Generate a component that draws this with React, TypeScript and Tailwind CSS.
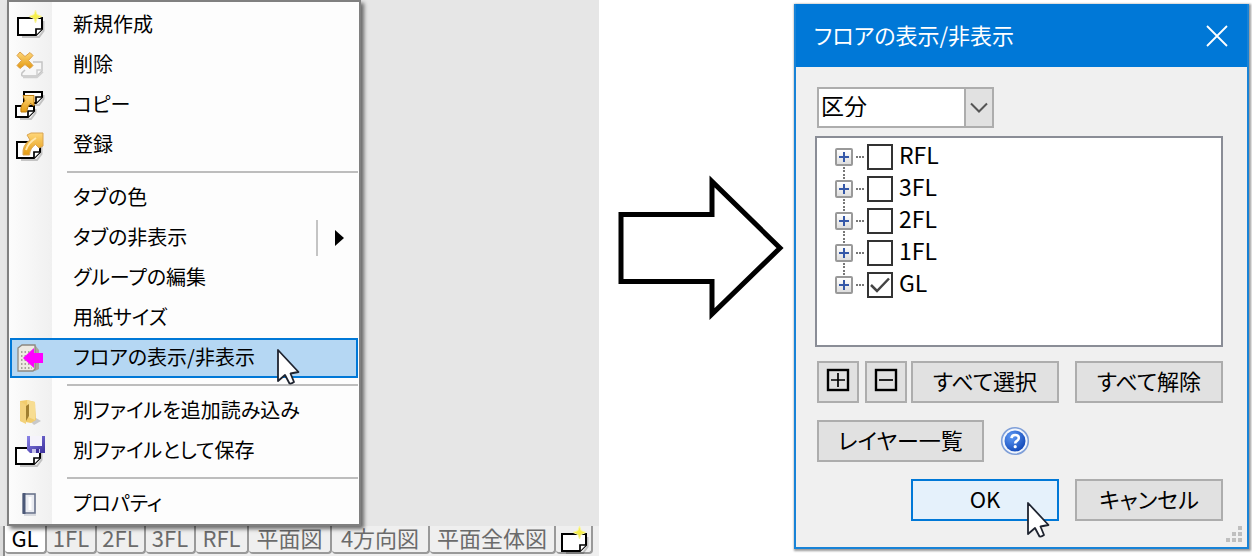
import React from "react";

function Cursor() {
  return (
    <svg width="24" height="37" viewBox="0 0 24 37" aria-hidden="true">
      <path
        d="M2 2V33L9 27L13.5 35.5Q15.500 36 18 34L14.500 25.500L22.500 24Z"
        fill="#fff"
        stroke="#1f2430"
        strokeWidth="1.8"
        strokeLinejoin="round"
      />
    </svg>
  );
}

function Icon({ children }: { children?: React.ReactNode }) {
  return (
    <svg width="30" height="30" viewBox="0 0 30 30" className="shrink-0 overflow-visible" aria-hidden="true">
      <defs>
        <linearGradient id="gold" x1="0" y1="0" x2="0" y2="1">
          <stop offset="0" stopColor="#ffd77a" />
          <stop offset="1" stopColor="#e39a10" />
        </linearGradient>
        <linearGradient id="floppy" x1="0" y1="0" x2="1" y2="1">
          <stop offset="0" stopColor="#8b84e8" />
          <stop offset="1" stopColor="#3b2f9c" />
        </linearGradient>
      </defs>
      {children}
    </svg>
  );
}

/* A sheet of paper with its lower right corner folded up. */
function Sheet({ x, y, w, h }: { x: number; y: number; w: number; h: number }) {
  const r = x + w;
  const b = y + h;
  return (
    <g>
      <path d={`M${r + 1.5} ${y + 3}V${b - 4}L${r - 3} ${b + 2}H${x + 4}`} fill="none" stroke="#000" strokeOpacity=".2" strokeWidth="2" />
      <path d={`M${x} ${y}H${r}V${b - 6}L${r - 6} ${b}H${x}Z`} fill="#fff" stroke="#000" strokeWidth="2" />
      <path d={`M${r - 6} ${b}V${b - 6}H${r}`} fill="#fff" stroke="#000" strokeWidth="1.7" />
    </g>
  );
}

function NewIcon() {
  return (
    <Icon>
      <Sheet x={3} y={8} w={24} h={17} />
      <path d="M20.500 0L22 4.500L27 6.500L22 8.500L20.500 13L19 8.500L14 6.500L19 4.500Z" fill="#f6ee4a" stroke="#faf6a0" strokeWidth="1" />
    </Icon>
  );
}

function DeleteIcon() {
  return (
    <Icon>
      <path d="M18 12H27V21L22 26H8Q6 26 7 23L10 20" fill="#f7f7f7" stroke="#c4c4c4" strokeWidth="1.500" />
      <path d="M27 20H22V26M8 27.500H22L28 22" fill="none" stroke="#cfcfcf" strokeWidth="1.500" />
      <path
        d="M5 2L10 6.500L15 2.500L18 5.500L13.500 10.500L18 15.500L15 18.500L10 14.500L5 18.500L2 15.500L6.500 10.500L2 5.500Z"
        fill="url(#gold)"
        stroke="#dba04a"
        strokeWidth="1"
      />
    </Icon>
  );
}

function CopyIcon() {
  return (
    <Icon>
      <Sheet x={9} y={2} w={18} h={11} />
      <Sheet x={1} y={16} w={18} h={11} />
      <path d="M6 22Q5 15 10 11L8 5.500H19V16L15.500 13.500Q12 17 11.500 22Z" fill="url(#gold)" stroke="#bd7c10" strokeWidth="1" />
    </Icon>
  );
}

function RegisterIcon() {
  return (
    <Icon>
      <Sheet x={2} y={12} w={23} h={16} />
      <path d="M8 25Q7 15 15 10L12 5L16 3H28V16L24 18L20.500 14.500Q15 18 14.500 25Z" fill="url(#gold)" stroke="#d9a452" strokeWidth="1" />
      <path d="M11 20Q13 13 21 8" fill="none" stroke="#ffe7ae" strokeWidth="2" />
    </Icon>
  );
}

function FloorIcon() {
  return (
    <Icon>
      <path d="M6 2H20L24 7V26L20 28H6Z" fill="#aaa59c" />
      <path d="M3 5L7 2H20V26L18 28H3Z" fill="#eeeae2" stroke="#8d8880" strokeWidth="1.300" />
      <path d="M6 9H17M6 13H17M6 17H17M6 21H17M6 25H17" stroke="#918c84" strokeWidth="1.500" strokeDasharray="1.500 2" />
      <path d="M8 15L19 5V10H28V20H19V25Z" fill="#ff00ff" />
    </Icon>
  );
}

function FolderIcon() {
  return (
    <Icon>
      <path d="M16 26L21 22L26 25L19 29Z" fill="#c9c9c9" />
      <path d="M5 5L12 4L20 6L21 24L16 27L5 25Z" fill="#f1cc6c" />
      <path d="M12 4L20 6V24L13 21Z" fill="#f7dd92" />
      <path d="M11 10L14 8V20L11 25Z" fill="#a07f30" />
      <path d="M5 5L11 9V28L5 25Z" fill="#f3d27c" />
    </Icon>
  );
}

function SaveIcon() {
  return (
    <Icon>
      <Sheet x={1} y={12} w={24} h={16} />
      <path d="M12 0H30V17H15L12 14Z" fill="url(#floppy)" />
      <path d="M15 0H27V10H15Z" fill="#f5f3fb" />
      <path d="M17 13H25V17H17Z" fill="#c8c4ea" />
      <path d="M21 13H24V17H21Z" fill="#40349c" />
    </Icon>
  );
}

function PropertyIcon() {
  return (
    <Icon>
      <rect x="8" y="5" width="12" height="19" fill="#e9ebf1" stroke="#6a748c" strokeWidth="1.600" />
      <rect x="8" y="4" width="2.500" height="21" fill="#4b5878" />
      <path d="M15 8V21" stroke="#fff" strokeWidth="3" />
      <path d="M9 26H21" stroke="#b9bdc8" strokeWidth="1" />
    </Icon>
  );
}

type Item = { label: string; icon?: React.ReactNode; sub?: boolean; active?: boolean };

const groups: Item[][] = [
  [
    { label: "新規作成", icon: <NewIcon /> },
    { label: "削除", icon: <DeleteIcon /> },
    { label: "コピー", icon: <CopyIcon /> },
    { label: "登録", icon: <RegisterIcon /> },
  ],
  [
    { label: "タブの色" },
    { label: "タブの非表示", sub: true },
    { label: "グループの編集" },
    { label: "用紙サイズ" },
    { label: "フロアの表示/非表示", icon: <FloorIcon />, active: true },
  ],
  [
    { label: "別ファイルを追加読み込み", icon: <FolderIcon /> },
    { label: "別ファイルとして保存", icon: <SaveIcon /> },
  ],
  [{ label: "プロパティ", icon: <PropertyIcon /> }],
];

function ContextMenu() {
  return (
    <div
      role="menu"
      className="relative z-10 ml-[7px] flex w-[354px] flex-col border-2 border-[#808080] bg-[#fdfdfd] bg-[linear-gradient(to_right,#fcfcfc,#f0f0f0)] bg-[length:43px_100%] bg-no-repeat px-px pt-[3px] text-[20px] leading-none text-black shadow-[3px_3px_4px_rgba(0,0,0,0.55)]"
    >
      {groups.map((items, g) => (
        <React.Fragment key={g}>
          {g > 0 && (
            <div role="separator" className="flex h-[13px] items-center pl-[57px]">
              <div className="h-0.5 flex-1 bg-[#bdbdbd]" />
            </div>
          )}
          {items.map((item) => (
            <button
              key={item.label}
              role="menuitem"
              className={
                item.active
                  ? "relative flex h-10 items-center border-2 border-[#0078d7] bg-[#b5d7f3] pl-[3px] text-left"
                  : "relative flex h-10 items-center pl-[5px] text-left"
              }
            >
              {item.icon ?? <Icon />}
              <span className="ml-7 flex-1 pb-0.5 whitespace-nowrap">{item.label}</span>
              {item.sub && (
                <span className="flex h-9 items-center border-l-2 border-[#c4c4c4] pr-3 pl-4">
                  <svg width="12" height="18" viewBox="0 0 12 18" aria-hidden="true">
                    <path d="M1 1L10 9L1 17Z" fill="#000" />
                  </svg>
                </span>
              )}
              {item.active && (
                <span className="absolute top-2 left-[264px]">
                  <Cursor />
                </span>
              )}
            </button>
          ))}
        </React.Fragment>
      ))}
    </div>
  );
}

const tabs = [
  { label: "GL", cls: "w-[42px] bg-white text-black" },
  { label: "1FL", cls: "w-[50px] text-[#6b6b6b]" },
  { label: "2FL", cls: "w-[49px] text-[#6b6b6b]" },
  { label: "3FL", cls: "w-[50px] text-[#6b6b6b]" },
  { label: "RFL", cls: "w-[53px] text-[#6b6b6b]" },
  { label: "平面図", cls: "w-[83px] text-[#6b6b6b]" },
  { label: "4方向図", cls: "w-[98px] text-[#6b6b6b]" },
  { label: "平面全体図", cls: "w-[126px] text-[#6b6b6b]" },
];

function TabBar() {
  return (
    <div className="flex flex-1 items-start bg-[#efefef] text-[22px] leading-none">
      <div className="w-[5px] self-stretch border-r-2 border-[#8a8a8a] bg-[#dcdcdc]" />
      {tabs.map((t) => (
        <button
          key={t.label}
          className={`flex h-7 shrink-0 items-center justify-center rounded-b border-r-2 border-b-2 border-[#999] pb-1 whitespace-nowrap ${t.cls}`}
        >
          {t.label}
        </button>
      ))}
      <button aria-label="新規作成" className="flex h-7 w-[37px] shrink-0 items-start justify-center rounded-b border-r-2 border-b-2 border-[#999]">
        <NewIcon />
      </button>
    </div>
  );
}

const floors = [
  { label: "RFL", checked: false },
  { label: "3FL", checked: false },
  { label: "2FL", checked: false },
  { label: "1FL", checked: false },
  { label: "GL", checked: true },
];

function FloorTree() {
  return (
    <ul className="mt-2 h-[211px] border-2 border-[#8a8d96] bg-white pt-[3px] pl-[18px]">
      {floors.map((f, i) => (
        <li key={f.label} className="relative flex h-8 items-center text-[23px] leading-none">
          {i < floors.length - 1 && (
            <span className="absolute top-[26px] left-2 h-3 border-l-2 border-dotted border-[#777]" />
          )}
          <button
            aria-label={`${f.label} を展開`}
            className="flex size-[18px] items-center justify-center rounded-xs border-2 border-[#999] bg-linear-to-b from-white to-[#dedede]"
          >
            <svg width="12" height="12" viewBox="0 0 12 12" className="shrink-0" aria-hidden="true">
              <path d="M6 1V11M1 6H11" stroke="#3558a8" strokeWidth="2" />
            </svg>
          </button>
          <span className="mx-[3px] w-2 border-t-2 border-dotted border-[#777]" />
          <label className="flex items-center">
            <span className="relative flex">
              <input
                type="checkbox"
                defaultChecked={f.checked}
                className="peer size-[26px] appearance-none border-2 border-[#333] bg-white"
              />
              <svg
                width="26"
                height="26"
                viewBox="0 0 26 26"
                aria-hidden="true"
                className="pointer-events-none absolute inset-0 hidden peer-checked:block"
              >
                <path d="M4 13L10 19L22 6.500" fill="none" stroke="#444" strokeWidth="2.500" />
              </svg>
            </span>
            <span className="ml-1.5 pb-1.5">{f.label}</span>
          </label>
        </li>
      ))}
    </ul>
  );
}

function BoxGlyph({ plus }: { plus?: boolean }) {
  return (
    <svg width="24" height="24" viewBox="0 0 24 24" fill="none" stroke="#000" className="shrink-0" aria-hidden="true">
      <rect x="2" y="2" width="20" height="20" strokeWidth="2.400" />
      <path d={plus ? "M5 12H19M12 5V19" : "M5 12H19"} strokeWidth="1.700" />
    </svg>
  );
}

const btn = "flex h-[42px] items-center justify-center border-2 border-[#adadad] bg-[#e1e1e1] pb-1 whitespace-nowrap";

function Dialog() {
  return (
    <div
      role="dialog"
      aria-label="フロアの表示/非表示"
      className="relative mt-1 border-2 border-t-0 border-[#1883d7] bg-[#f0f0f0] text-[22px] leading-none text-black shadow-[1px_1px_2px_1px_rgba(0,0,0,0.4)]"
    >
      <header className="flex h-[63px] items-center justify-between bg-[#0078d7] pr-[19px] pl-[18px] text-white">
        <h1 className="pb-1">フロアの表示/非表示</h1>
        <button aria-label="閉じる">
          <svg width="22" height="22" viewBox="0 0 22 22" aria-hidden="true">
            <path d="M1 1L21 21M21 1L1 21" stroke="#fff" strokeWidth="1.800" />
          </svg>
        </button>
      </header>
      <div className="flex flex-col pt-5 pr-6 pb-[26px] pl-[19px]">
        <div className="relative ml-0.5 flex h-[41px] w-[177px]">
          <select aria-label="区分" className="w-full appearance-none border-2 border-[#adadad] bg-white pb-1 pl-0.5 text-[23px] outline-none">
            <option>区分</option>
          </select>
          <span className="pointer-events-none absolute inset-y-0 right-0 flex w-[30px] items-center justify-center border-2 border-[#adadad] bg-[#e1e1e1]">
            <svg width="18" height="12" viewBox="0 0 18 12" aria-hidden="true">
              <path d="M1 1.500L9 9.500L17 1.500" fill="none" stroke="#555" strokeWidth="2" />
            </svg>
          </span>
        </div>
        <FloorTree />
        <div className="mt-3.5 flex flex-col gap-[17px] pl-0.5">
          <div className="flex">
            <button aria-label="すべて展開" className={`${btn} w-[42px]`}>
              <BoxGlyph plus />
            </button>
            <button aria-label="すべて折りたたむ" className={`${btn} ml-1.5 w-[42px]`}>
              <BoxGlyph />
            </button>
            <button className={`${btn} ml-1 w-[148px]`}>すべて選択</button>
            <button className={`${btn} ml-auto w-[148px]`}>すべて解除</button>
          </div>
          <div className="flex items-center gap-4">
            <button className={`${btn} w-[167px]`}>レイヤー一覧</button>
            <button aria-label="ヘルプ">
              <svg width="30" height="30" viewBox="0 0 30 30" aria-hidden="true">
                <defs>
                  <radialGradient id="help" cx=".35" cy=".3" r=".8">
                    <stop offset="0" stopColor="#5f9af5" />
                    <stop offset="1" stopColor="#0d43b4" />
                  </radialGradient>
                </defs>
                <circle cx="15" cy="15" r="13.300" fill="#f2f6fd" stroke="#7f9fd8" strokeWidth="1.600" />
                <circle cx="15" cy="15" r="10.500" fill="url(#help)" />
                <path d="M11.500 12.200Q11.800 9 15.200 9Q18.800 9 18.800 12Q18.800 14 16.800 15Q15.200 15.800 15.200 17.500" fill="none" stroke="#fff" strokeWidth="2.600" />
                <circle cx="15.200" cy="20.700" r="1.600" fill="#fff" />
              </svg>
            </button>
          </div>
          <div className="flex justify-end gap-4">
            <button className="relative flex h-[42px] w-[148px] items-center justify-center border-2 border-[#0078d7] bg-[#e5f1fb] pb-1">
              <span>OK</span>
              <span className="absolute top-5 left-[113px]">
                <Cursor />
              </span>
            </button>
            <button className={`${btn} w-[148px]`}>キャンセル</button>
          </div>
        </div>
      </div>
      <svg width="18" height="18" viewBox="0 0 18 18" className="absolute right-1 bottom-1" fill="#bfbfbf" aria-hidden="true">
        <path d="M13 1h4v4h-4zM7 7h4v4H7zM13 7h4v4h-4zM1 13h4v4H1zM7 13h4v4H7zM13 13h4v4h-4z" />
      </svg>
    </div>
  );
}

export default function App() {
  return (
    <main className="flex min-h-screen items-stretch bg-white font-['Noto_Sans_CJK_JP',sans-serif] [font-feature-settings:'palt']">
      <section className="flex min-w-0 flex-1 flex-col bg-[#e6e6e6]">
        <ContextMenu />
        <TabBar />
      </section>
      <div className="flex w-[195px] shrink-0 justify-center pt-[174px] pl-1.5">
        <svg width="168" height="148" viewBox="0 0 168 148" aria-hidden="true">
          <path d="M5 40.500H96V7.500L164 74L96 140V107.500H5Z" fill="#fff" stroke="#000" strokeWidth="5" />
        </svg>
      </div>
      <section className="w-[458px] shrink-0 pr-[3px]">
        <Dialog />
      </section>
    </main>
  );
}
